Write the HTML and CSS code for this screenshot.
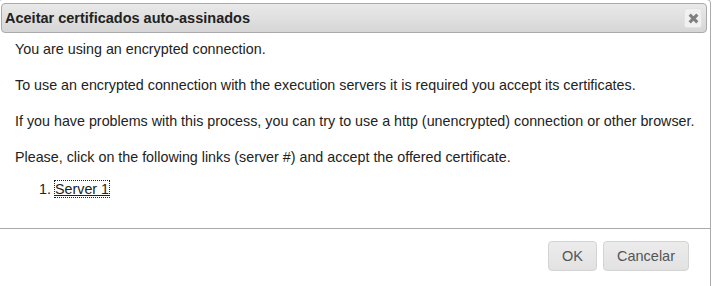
FILE: index.html
```html
<!DOCTYPE html>
<html lang="pt">
<head>
  <meta charset="UTF-8" />
  <title>Aceitar certificados auto-assinados</title>
  <link rel="stylesheet" href="styles.css">
</head>
<body>
  <div class="dialog">
    <div class="titlebar">
      <span class="title">Aceitar certificados auto-assinados</span>
      <button class="close" title="Fechar">
        <svg width="11" height="11" viewBox="0 0 10 10">
          <path d="M1.5 1.5 L8.5 8.5 M8.5 1.5 L1.5 8.5" stroke="#808080" stroke-width="2.8" />
        </svg>
      </button>
    </div>

    <div class="content">
      <p>You are using an encrypted connection.</p>
      <p>To use an encrypted connection with the execution servers it is required you accept its certificates.</p>
      <p>If you have problems with this process, you can try to use a http (unencrypted) connection or other browser.</p>
      <p>Please, click on the following links (server #) and accept the offered certificate.</p>
      <ol class="servers">
        <li><a href="#" class="focused">Server 1</a></li>
      </ol>
    </div>

    <div class="buttonpane">
      <button class="btn">OK</button>
      <button class="btn">Cancelar</button>
    </div>
  </div>
</body>
</html>
```

FILE: styles.css
```css
body {
  margin: 0;
  font-family: 'Liberation Sans', Arial, sans-serif;
  background-color: #fff;
  color: #222;
  overflow: hidden;
}

.dialog {
  width: 713px;
  height: 300px;
  box-sizing: border-box;
  margin: -1px 0 0 -2px;
  padding: 3px 3px 0 2px;
  border: 1px solid #aaa;
  border-radius: 4px;
  background-color: #fff;
}

.titlebar {
  display: flex;
  align-items: center;
  justify-content: space-between;
  height: 28px;
  padding: 0 5px 0 3px;
  border: 1px solid #aaa;
  border-radius: 4px;
  background: linear-gradient(to bottom, #e9e9e9, #d6d6d6);
}

.title {
  font-size: 14.5px;
  font-weight: bold;
  color: #222;
}

.close {
  width: 18px;
  height: 20px;
  padding: 0;
  border: 1px solid #e2e2e2;
  border-radius: 3px;
  background-color: #f1f1f1;
  display: flex;
  align-items: center;
  justify-content: center;
  margin-right: -1px;
}

.content {
  padding: 7px 2px 0 14px;
  height: 188px;
  font-size: 14.3px;
}

.content p {
  margin: 0 0 18px 0;
  line-height: 18px;
}

.servers {
  margin: -4px 0 0 0;
  padding-left: 40px;
  line-height: 18px;
}

.servers a {
  color: #222;
  text-decoration: underline;
}

.servers a.focused {
  outline: 1px dotted #222;
}

.buttonpane {
  margin: 0 -3px 0 -2px;
  border-top: 1px solid #aaa;
  display: flex;
  justify-content: flex-end;
  gap: 6px;
  padding: 12px 21px 0 0;
}

.btn {
  font-family: 'Liberation Sans', Arial, sans-serif;
  font-size: 14.5px;
  color: #555;
  height: 30px;
  padding: 0 13px;
  border: 1px solid #d3d3d3;
  border-radius: 4px;
  background: linear-gradient(to bottom, #ececec, #e2e2e2);
}
```
